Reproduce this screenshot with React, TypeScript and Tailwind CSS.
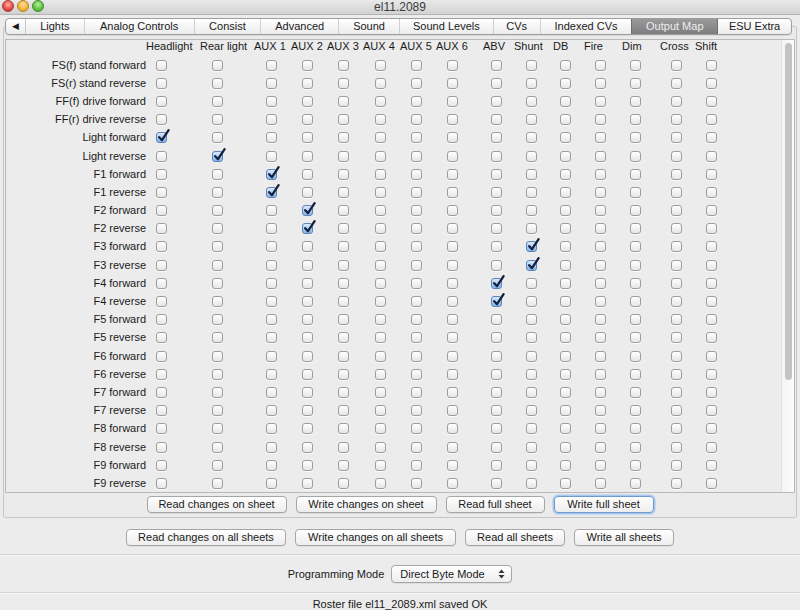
import React from "react";

// Output Map sheet of the decoder programmer window

const TABS = [
  { label: "Lights", w: "w-[59px]" },
  { label: "Analog Controls", w: "w-[110px]" },
  { label: "Consist", w: "w-[67px]" },
  { label: "Advanced", w: "w-[78px]" },
  { label: "Sound", w: "w-[61px]" },
  { label: "Sound Levels", w: "w-[94px]" },
  { label: "CVs", w: "w-[47px]" },
  { label: "Indexed CVs", w: "w-[91px]" },
  { label: "Output Map", w: "w-[87px]", active: true },
  { label: "ESU Extra", w: "w-[73px]" },
];

// header name + where the checkbox sits inside its column
const COLUMNS = [
  { name: "Headlight", ml: "ml-[10px]" },
  { name: "Rear light", ml: "ml-[12px]" },
  { name: "AUX 1", ml: "ml-[12px]" },
  { name: "AUX 2", ml: "ml-[11px]" },
  { name: "AUX 3", ml: "ml-[11px]" },
  { name: "AUX 4", ml: "ml-[12px]" },
  { name: "AUX 5", ml: "ml-[11px]" },
  { name: "AUX 6", ml: "ml-[11px]" },
  { name: "ABV", ml: "ml-[8px]" },
  { name: "Shunt", ml: "ml-[12px]" },
  { name: "DB", ml: "ml-[7px]" },
  { name: "Fire", ml: "ml-[11px]" },
  { name: "Dim", ml: "ml-[8px]" },
  { name: "Cross", ml: "ml-[11px]" },
  { name: "Shift", ml: "ml-[11px]" },
];

const ROWS: string[] = [
  "FS(f) stand forward",
  "FS(r) stand reverse",
  "FF(f) drive forward",
  "FF(r) drive reverse",
  "Light forward",
  "Light reverse",
];
for (let i = 1; i <= 9; i++) {
  ROWS.push(`F${i} forward`, `F${i} reverse`);
}

// row label -> checked column
const CHECKED: Record<string, string> = {
  "Light forward": "Headlight",
  "Light reverse": "Rear light",
  "F1 forward": "AUX 1",
  "F1 reverse": "AUX 1",
  "F2 forward": "AUX 2",
  "F2 reverse": "AUX 2",
  "F3 forward": "Shunt",
  "F3 reverse": "Shunt",
  "F4 forward": "ABV",
  "F4 reverse": "ABV",
};

function CheckBox({ checked }: { checked?: boolean }) {
  if (!checked) {
    return (
      <div className="w-[11px] h-[11px] rounded-[3px] border border-[#9d9d9d] bg-gradient-to-b from-white to-[#e6e6e6] shadow-[0_1px_0_rgba(255,255,255,0.8)]" />
    );
  }
  return (
    <div className="relative w-[11px] h-[11px] rounded-[3px] border border-[#5d82b8] bg-gradient-to-b from-[#d8eafc] to-[#86b6ec]">
      <svg className="absolute left-[0px] top-[-4px] w-[13px] h-[14px]" viewBox="0 0 13 14">
        <path d="M2.2 8.2 L5 11.2 L11.6 1.2" stroke="#15223f" strokeWidth="2.3" fill="none" strokeLinecap="round" strokeLinejoin="round" />
      </svg>
    </div>
  );
}

function Button({ label, w, focused }: { label: string; w: string; focused?: boolean }) {
  return (
    <div
      className={
        "h-[17px] flex items-center justify-center rounded-[4px] border bg-gradient-to-b from-white to-[#ededed] text-[11px] leading-none text-[#1a1a1a] " +
        w +
        (focused
          ? " border-[#6f9ad0] shadow-[0_0_0_1.5px_#a9c8ef]"
          : " border-[#a6a6a6] shadow-[0_1px_0_rgba(0,0,0,0.06)]")
      }
    >
      {label}
    </div>
  );
}

function Groove() {
  return <div className="h-[2px] border-t border-[#d3d3d3] bg-[#f7f7f7]" />;
}

export default function App() {
  return (
    <div className="w-[800px] h-[610px] overflow-hidden bg-[#ececec] font-['Lucida_Grande','Liberation_Sans',sans-serif] text-[#1a1a1a] text-[11px]">
      {/* title bar */}
      <div className="relative h-[15px] bg-gradient-to-b from-[#e9e9e9] to-[#d2d2d2] border-b border-[#b4b4b4] flex items-center justify-center">
        <div className="absolute left-[2px] top-[0px] flex gap-[3px]">
          <div className="w-[12px] h-[12px] rounded-full border border-[#b03a35] bg-[radial-gradient(circle_at_50%_35%,#ffb0a8,#e2463f_60%,#c9302a)]" />
          <div className="w-[12px] h-[12px] rounded-full border border-[#b4801e] bg-[radial-gradient(circle_at_50%_35%,#ffe29a,#f3b23a_60%,#d9921d)]" />
          <div className="w-[12px] h-[12px] rounded-full border border-[#3f8a2c] bg-[radial-gradient(circle_at_50%_35%,#b8f09e,#5cc140_60%,#3f9e2a)]" />
        </div>
        <span className="text-[12px] leading-none text-[#3a3a3a]">el11.2089</span>
      </div>

      {/* tabs */}
      <div className="relative z-10 mt-[3px] ml-[5px] w-[787px] h-[17px] flex rounded-[4px] border border-[#9e9e9e] bg-gradient-to-b from-white to-[#ececec] overflow-hidden shadow-[0_1px_1px_rgba(0,0,0,0.08)]">
        <div className="w-[20px] flex items-center justify-center text-[9px] leading-none border-r border-[#c8c8c8]">◀</div>
        {TABS.map((t, i) => (
          <div
            key={t.label}
            className={
              "flex items-center justify-center leading-none " +
              t.w +
              (t.active
                ? " bg-gradient-to-b from-[#9a9a9a] to-[#7e7e7e] text-[#efefef] border-x border-[#6e6e6e]"
                : i < TABS.length - 1 && !TABS[i + 1].active
                ? " border-r border-[#d0d0d0]"
                : "")
            }
          >
            {t.label}
          </div>
        ))}
      </div>

      {/* sheet panel */}
      <div className="mx-[3px] -mt-[9px] h-[492px] border border-[#c6c6c6] rounded-[3px] bg-[#ebebeb] pt-[12px] px-[1px]">
        <div className="h-[454px] flex border border-[#b9b9b9] bg-[#ececec] overflow-hidden">
          <div className="flex-1 grid grid-cols-[140px_54px_54px_37px_36px_36px_37px_36px_47px_31px_39px_31px_38px_38px_35px_1fr] grid-rows-[16px_repeat(24,18.2px)] overflow-hidden">
            <div />
            {COLUMNS.map((c) => (
              <div key={c.name} className="pt-[1px] leading-[11px] whitespace-nowrap">
                {c.name}
              </div>
            ))}
            {ROWS.map((r) => (
              <React.Fragment key={r}>
                <div className="flex items-center justify-end whitespace-nowrap leading-none">{r}</div>
                {COLUMNS.map((c) => (
                  <div key={c.name} className="flex items-center">
                    <div className={c.ml}>
                      <CheckBox checked={CHECKED[r] === c.name} />
                    </div>
                  </div>
                ))}
              </React.Fragment>
            ))}
          </div>
          {/* scrollbar */}
          <div className="w-[13px] border-l border-[#e2e2e2] bg-gradient-to-r from-[#f4f4f4] to-[#fbfbfb] flex justify-center pt-[3px]">
            <div className="w-[7px] h-[337px] rounded-full bg-[#c3c3c3]" />
          </div>
        </div>
        <div className="mt-[3px] flex justify-center gap-[9px]">
          <Button label="Read changes on sheet" w="w-[140px]" />
          <Button label="Write changes on sheet" w="w-[141px]" />
          <Button label="Read full sheet" w="w-[99px]" />
          <Button label="Write full sheet" w="w-[100px]" focused />
        </div>
      </div>

      <div className="mt-[11px] flex justify-center gap-[9px]">
        <Button label="Read changes on all sheets" w="w-[160px]" />
        <Button label="Write changes on all sheets" w="w-[161px]" />
        <Button label="Read all sheets" w="w-[100px]" />
        <Button label="Write all sheets" w="w-[100px]" />
      </div>

      <div className="mt-[8px]">
        <Groove />
      </div>

      <div className="mt-[9px] flex items-center justify-center gap-[7px]">
        <span className="leading-none">Programming Mode</span>
        <div className="w-[121px] h-[18px] rounded-[4px] border border-[#a6a6a6] bg-gradient-to-b from-white to-[#ededed] flex items-center pl-[8px] pr-[6px] shadow-[0_1px_0_rgba(0,0,0,0.06)]">
          <span className="flex-1 leading-none">Direct Byte Mode</span>
          <svg width="7" height="10" viewBox="0 0 7 10">
            <path d="M3.5 0.5 L6.5 4 L0.5 4 Z" fill="#333" />
            <path d="M3.5 9.5 L6.5 6 L0.5 6 Z" fill="#333" />
          </svg>
        </div>
      </div>

      <div className="mt-[9px]">
        <Groove />
      </div>

      <div className="pt-[4px] text-center leading-[13px]">Roster file el11_2089.xml saved OK</div>
    </div>
  );
}
